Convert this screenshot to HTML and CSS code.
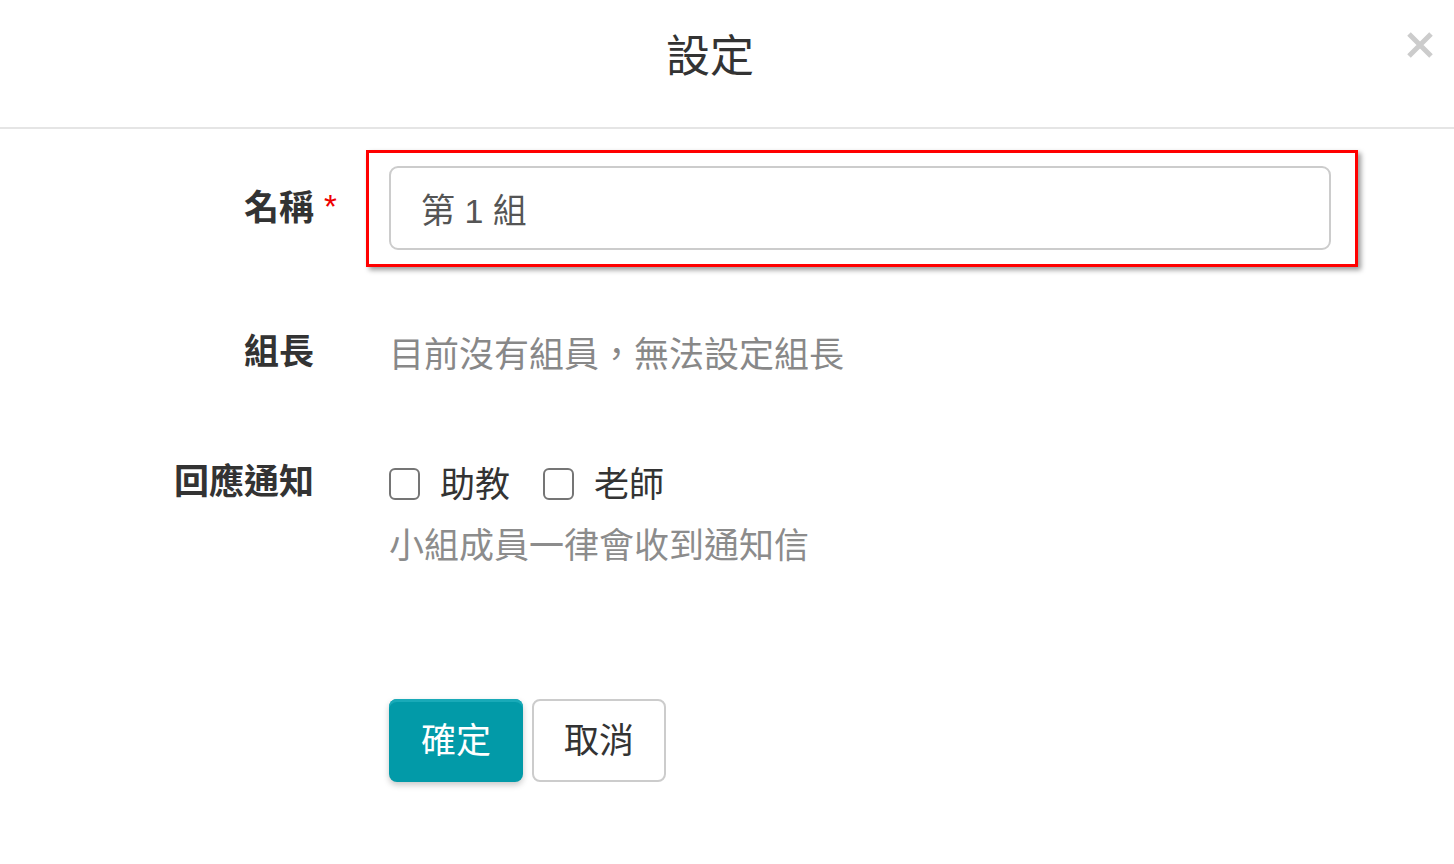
FILE: index.html
```html
<!DOCTYPE html>
<html lang="zh-Hant">
<head>
<meta charset="utf-8">
<title>設定</title>
<link rel="stylesheet" href="styles.css">
</head>
<body>
<div class="dialog">
  <header class="dialog-header">
    <h1 class="dialog-title">設定</h1>
    <button class="close" aria-label="關閉">
      <svg width="26" height="26" viewBox="0 0 26 26"><path d="M2 2 L24 24 M24 2 L2 24" stroke="#cccccc" stroke-width="5" fill="none"/></svg>
    </button>
  </header>
  <form class="form">
    <div class="row row-name">
      <label class="label">名稱<span class="req">*</span></label>
      <div class="control">
        <div class="highlight"></div>
        <input class="text-input" type="text" value="第 1 組">
      </div>
    </div>
    <div class="row row-leader">
      <label class="label">組長</label>
      <div class="control"><p class="muted">目前沒有組員，無法設定組長</p></div>
    </div>
    <div class="row row-notify">
      <label class="label">回應通知</label>
      <div class="control">
        <div class="checks">
          <span class="check"><span class="box"></span>助教</span>
          <span class="check"><span class="box"></span>老師</span>
        </div>
        <p class="help">小組成員一律會收到通知信</p>
      </div>
    </div>
    <div class="row row-actions">
      <span></span>
      <div class="control actions">
        <button type="button" class="btn btn-primary">確定</button>
        <button type="button" class="btn btn-default">取消</button>
      </div>
    </div>
  </form>
</div>
</body>
</html>
```

FILE: styles.css
```css
html, body {
  margin: 0;
  padding: 0;
  background: #ffffff;
}
body {
  font-family: "Liberation Sans", "Noto Sans CJK TC", sans-serif;
  color: #333333;
}
.dialog {
  width: 1454px;
  height: 864px;
  position: relative;
  overflow: hidden;
}
.dialog-header {
  box-sizing: border-box;
  height: 129px;
  border-bottom: 2px solid #e5e5e5;
  display: flex;
  align-items: center;
  justify-content: center;
  padding-right: 34px;
}
.dialog-title {
  margin: 0;
  font-size: 44px;
  font-weight: 400;
  line-height: 56px;
  color: #333333;
  position: relative;
  top: -7px;
}
.close {
  position: absolute;
  top: 32px;
  right: 21px;
  border: 0;
  background: none;
  padding: 0;
  width: 26px;
  height: 26px;
  display: block;
}
.close svg { display: block; }
.form {
  padding-top: 37px;
}
.row {
  display: grid;
  grid-template-columns: 314px 942px;
  column-gap: 75px;
  align-items: start;
}
.label {
  text-align: right;
  font-size: 35px;
  font-weight: 700;
  color: #333333;
  line-height: 48px;
  position: relative;
  white-space: nowrap;
}
.req {
  position: absolute;
  left: 100%;
  margin-left: 10px;
  top: -1px;
  color: #ee0000;
  font-weight: 400;
  font-size: 33px;
}
.control {
  position: relative;
}
.row-name .label {
  margin-top: 18px;
}
.text-input {
  display: block;
  box-sizing: border-box;
  width: 942px;
  height: 84px;
  border: 2px solid #cccccc;
  border-radius: 9px;
  padding: 0 30px;
  font-family: "Liberation Sans", "Noto Sans CJK TC", sans-serif;
  font-size: 34px;
  color: #555555;
  background: #ffffff;
  outline: none;
}
.highlight {
  position: absolute;
  left: -23px;
  right: -27px;
  top: -16px;
  bottom: -17px;
  border: 3px solid #ff0000;
  box-shadow: 3px 3px 5px rgba(0, 0, 0, 0.4);
  pointer-events: none;
}
.row-leader {
  margin-top: 78px;
}
.muted {
  margin: 0;
  font-size: 35px;
  line-height: 48px;
  color: #888888;
  font-family: "Noto Sans CJK TC", sans-serif;
}
.row-notify {
  margin-top: 82px;
}
.checks {
  display: flex;
  align-items: center;
  height: 48px;
  gap: 33px;
}
.check {
  display: flex;
  align-items: center;
  gap: 20px;
  font-size: 35px;
  line-height: 48px;
  color: #333333;
  font-family: "Noto Sans CJK TC", sans-serif;
}
.box {
  display: inline-block;
  box-sizing: border-box;
  width: 31px;
  height: 32px;
  border: 2px solid #757575;
  border-radius: 6px;
  background: #ffffff;
  margin-top: 4px;
}
.help {
  margin: 13px 0 0 0;
  font-size: 35px;
  line-height: 48px;
  color: #8c8c8c;
  font-family: "Noto Sans CJK TC", sans-serif;
}
.row-actions {
  margin-top: 132px;
}
.actions {
  display: flex;
  gap: 9px;
}
.btn {
  box-sizing: border-box;
  height: 83px;
  border-radius: 8px;
  font-family: "Noto Sans CJK TC", sans-serif;
  font-size: 35px;
  line-height: 48px;
  padding: 0 0 5px 0;
  cursor: pointer;
}
.btn-primary {
  width: 134px;
  background: #029aa8;
  border: 0;
  color: #ffffff;
  box-shadow: inset 0 3px 0 #19aab8, 0 3px 6px rgba(0, 0, 0, 0.22);
}
.btn-default {
  width: 134px;
  background: #ffffff;
  border: 2px solid #cccccc;
  color: #333333;
}
```
